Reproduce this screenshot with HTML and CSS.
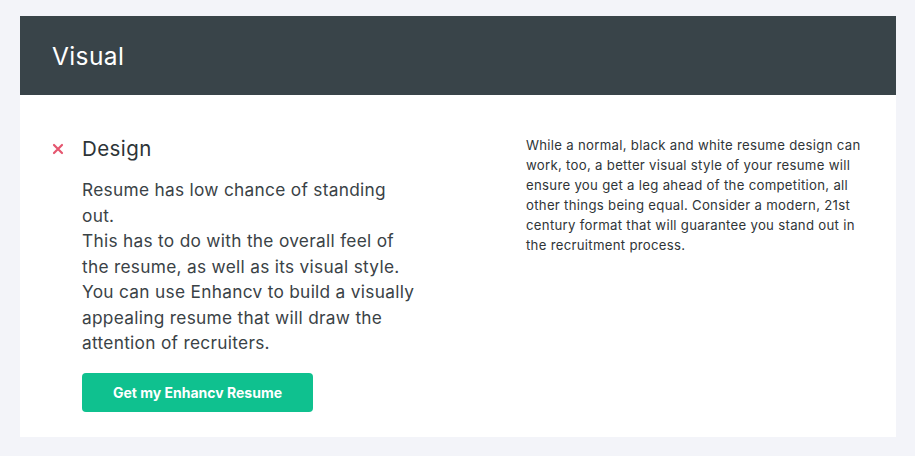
FILE: index.html
```html
<!DOCTYPE html>
<html lang="en">
<head>
<meta charset="utf-8">
<title>Visual</title>
<link rel="stylesheet" href="styles.css">
</head>
<body>
<section class="card">
  <header class="card-header">
    <h2 class="card-title">Visual</h2>
  </header>
  <div class="card-body">
    <div class="check">
      <div class="check-head">
        <span class="check-icon" aria-hidden="true">
          <svg width="12" height="12" viewBox="0 0 12 12"><path d="M2 2 L10 10 M10 2 L2 10" stroke="#e5566f" stroke-width="2.2" stroke-linecap="round"/></svg>
        </span>
        <h3 class="check-title">Design</h3>
      </div>
      <p class="check-text">Resume has low chance of standing out.<br>This has to do with the overall feel of the resume, as well as its visual style. You can use Enhancv to build a visually appealing resume that will draw the attention of recruiters.</p>
      <a class="cta" href="#">Get my Enhancv Resume</a>
    </div>
    <p class="aside">While a normal, black and white resume design can work, too, a better visual style of your resume will ensure you get a leg ahead of the competition, all other things being equal. Consider a modern, 21st century format that will guarantee you stand out in the recruitment process.</p>
  </div>
</section>
</body>
</html>
```
FILE: styles.css
```css
* { box-sizing: border-box; }
html, body { margin: 0; padding: 0; }
body {
  background: #f3f4f9;
  font-family: Inter, "Noto Sans", sans-serif;
  padding: 16px 19px 0 20px;
}
.card {
  width: 876px;
  background: #ffffff;
}
.card-header {
  background: #394449;
  height: 79px;
  display: flex;
  align-items: center;
  padding: 0 32px;
}
.card-title {
  margin: 0;
  color: #ffffff;
  font-size: 24.5px;
  font-weight: 400;
  line-height: 30px;
  letter-spacing: 0.016em;
  padding-top: 1px;
}
.card-body {
  display: grid;
  grid-template-columns: 368px 340px;
  justify-content: space-between;
  padding: 40px 30px 25px 32px;
}
.check-head {
  display: flex;
  align-items: center;
  height: 28px;
}
.check-icon {
  width: 30px;
  display: flex;
  align-items: center;
}
.check-icon svg { display: block; }
.check-title {
  margin: 0;
  font-size: 20.5px;
  font-weight: 400;
  line-height: 28px;
  letter-spacing: 0.021em;
  color: #2d3437;
}
.check-text {
  margin: 14px 0 0 30px;
  font-size: 17.3px;
  line-height: 25.5px;
  letter-spacing: 0.017em;
  color: #3a4246;
}
.cta {
  display: flex;
  align-items: center;
  justify-content: center;
  margin: 17px 0 0 30px;
  width: 231px;
  height: 39px;
  border-radius: 4px;
  background: #0fc18f;
  color: #ffffff;
  font-size: 14px;
  font-weight: 700;
  letter-spacing: 0;
  text-decoration: none;
}
.aside {
  margin: 0;
  font-size: 13.2px;
  line-height: 20px;
  letter-spacing: 0.022em;
  color: #2f3538;
}
```
